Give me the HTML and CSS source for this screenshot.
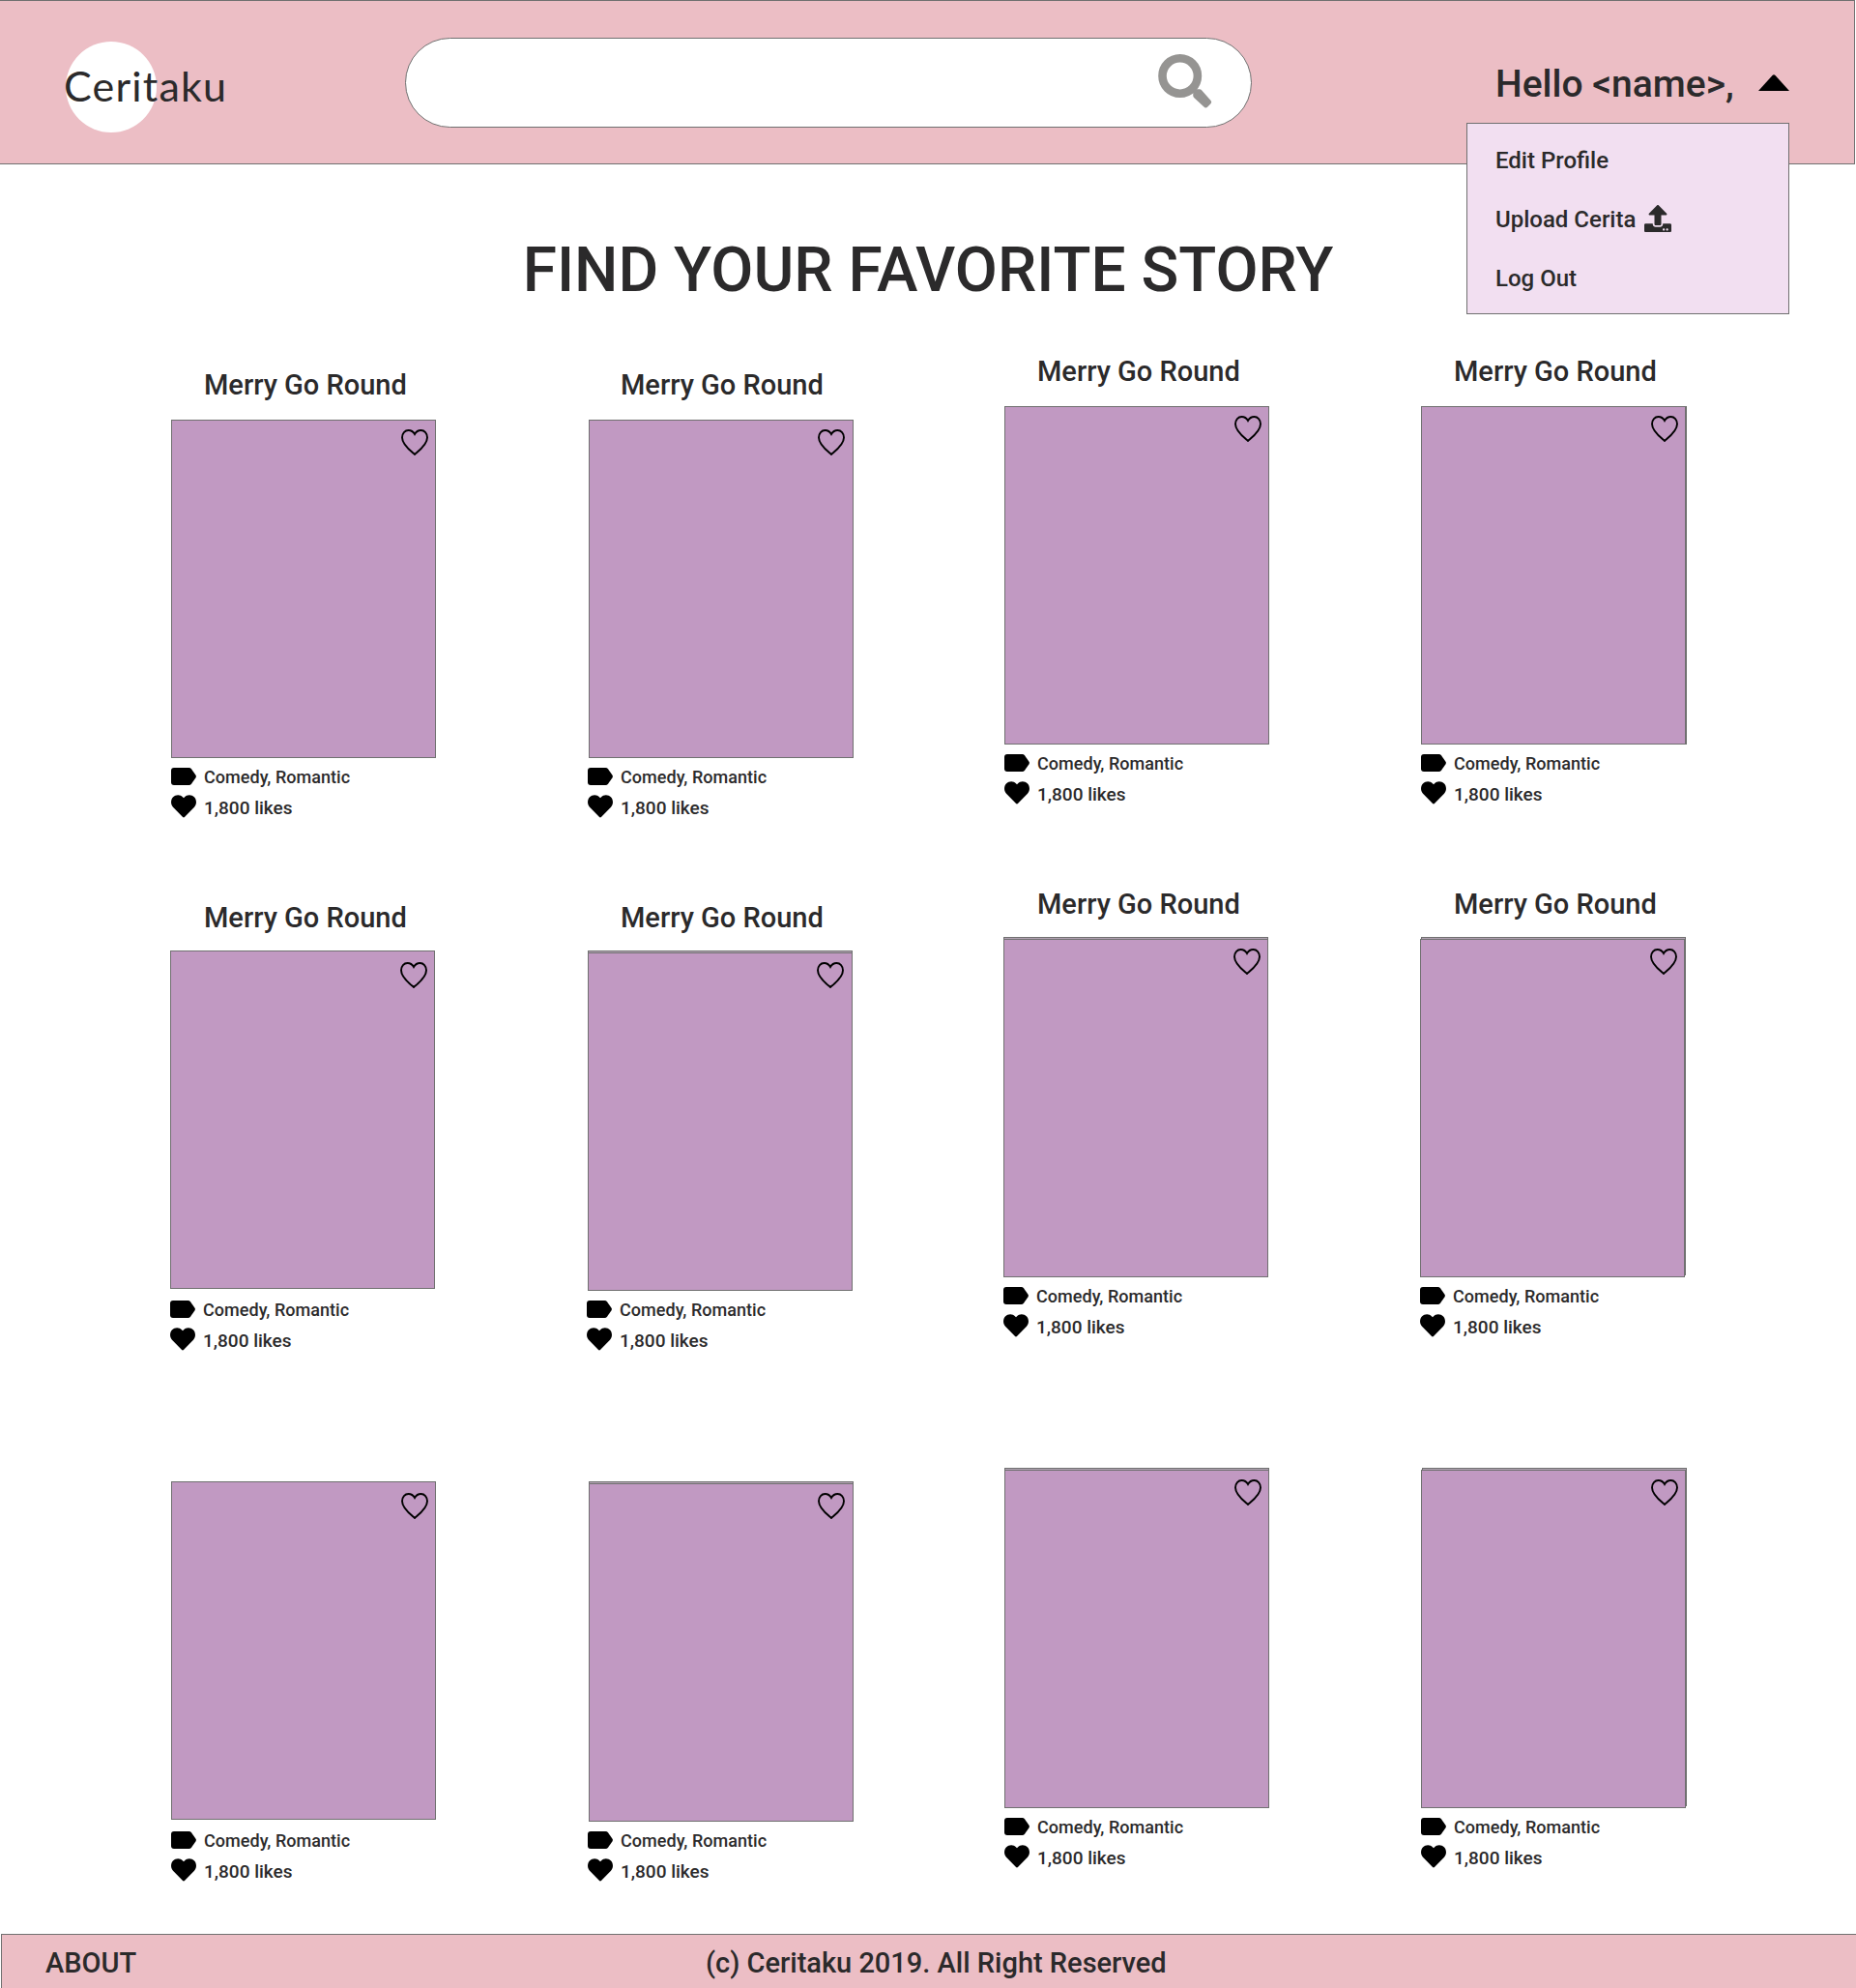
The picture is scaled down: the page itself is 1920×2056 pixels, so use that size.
FILE: index.html
```html
<!DOCTYPE html>
<html lang="en">
<head>
<meta charset="utf-8">
<title>Ceritaku</title>
<link rel="stylesheet" href="styles.css">
</head>
<body>
<svg width="0" height="0" class="sprite" aria-hidden="true">
  <symbol id="outline" viewBox="0 0 28 27"><path d="M14 26C10 22.500 1 16 1 8.500C1 4 4 1 7.500 1C10.500 1 12.700 2.700 14 5C15.300 2.700 17.500 1 20.500 1C24 1 27 4 27 8.500C27 16 18 22.500 14 26Z" fill="none" stroke="#000" stroke-width="1.900"/></symbol>
  <symbol id="heart" viewBox="0 0 26 24"><path d="M13 23.500Q12.400 23.500 11.800 22.800L2 12.800C-.7 10 -.5 5 1.900 2.500C5-.7 9.500-.5 12.200 2.400L13 3.200L13.800 2.400C16.500-.5 21-.7 24.100 2.500C26.500 5 26.700 10 24 12.800L14.200 22.800Q13.600 23.500 13 23.500Z"/></symbol>
  <symbol id="tag" viewBox="0 0 26 18"><path d="M3 0H18.500Q20 0 21 1.200L25.500 7.800Q26.300 9 25.500 10.200L21 16.800Q20 18 18.500 18H3Q0 18 0 15V3Q0 0 3 0Z"/></symbol>
</svg>
<header class="header">
  <div class="logo"><span class="logo-text">Ceritaku</span></div>
  <div class="search">
    <svg class="search-icon" width="56" height="56" viewBox="0 0 56 56"><circle cx="22.700" cy="22.500" r="18.200" fill="none" stroke="#959492" stroke-width="8.600"/><path d="M39 43V39H43L52.300 49.500L49.300 52.500Z" fill="#959492" stroke="#959492" stroke-width="5.500" stroke-linejoin="round"/></svg>
  </div>
  <div class="account">
    <span class="hello">Hello &lt;name&gt;,</span>
    <svg class="caret" width="32" height="17" viewBox="0 0 32 17"><path d="M0 17L14.500 1Q16-.5 17.500 1L32 17Z"/></svg>
    <nav class="menu">
      <a>Edit Profile</a>
      <a>Upload Cerita <svg width="28" height="28" viewBox="0 0 512 512"><path fill="#2b2a2b" d="M296 384h-80c-13.300 0-24-10.700-24-24V192h-87.700c-17.800 0-26.700-21.500-14.100-34.100L242.300 5.700c7.500-7.500 19.800-7.500 27.300 0l152.200 152.200c12.600 12.600 3.700 34.100-14.100 34.100H320v168c0 13.300-10.700 24-24 24zm216-8v112c0 13.300-10.700 24-24 24H24c-13.300 0-24-10.700-24-24V376c0-13.300 10.700-24 24-24h136v8c0 30.900 25.100 56 56 56h80c30.900 0 56-25.100 56-56v-8h136c13.300 0 24 10.700 24 24zm-124 88c0-11-9-20-20-20s-20 9-20 20 9 20 20 20 20-9 20-20zm64 0c0-11-9-20-20-20s-20 9-20 20 9 20 20 20 20-9 20-20z"/></svg></a>
      <a>Log Out</a>
    </nav>
  </div>
</header>
<main class="main">
  <h1 class="heading">FIND YOUR FAVORITE STORY</h1>
  <section class="stories" id="stories"></section>
</main>
<footer class="footer"><a class="about">ABOUT</a><span>(c) Ceritaku 2019. All Right Reserved</span></footer>
<script src="stories.js"></script>
</body>
</html>
```

FILE: styles.css
```css
* { box-sizing: border-box; }
body { margin: 0; width: 1920px; height: 2056px; overflow: hidden; background: #fff; color: #2b2a2b; font-family: Roboto, sans-serif; font-weight: 500; }
.sprite { position: absolute; }
svg { display: block; flex: none; }

.header { display: flex; width: 1919px; height: 170px; padding-left: 68px; background: #ecbec5; border: 1px solid #707070; border-left: 0; }
.logo { display: flex; align-items: center; width: 94px; height: 94px; margin-top: 42px; border-radius: 50%; background: #fff; }
.logo-text { margin: -3px 0 0 -2px; font: 400 43px/50px Lato, sans-serif; letter-spacing: 1.2px; white-space: nowrap; }
.search { display: flex; justify-content: flex-end; width: 876px; height: 93px; margin: 38px 0 0 257px; padding: 16px 40px 0 0; background: #fff; border: 1px solid #707070; border-radius: 47px; }
.account { position: relative; display: flex; width: 334px; margin-left: 222px; padding: 61px 0 0 30px; justify-content: space-between; }
.hello { padding-top: 1px; font-size: 39px; line-height: 48px; white-space: nowrap; }
.caret { margin-top: 15px; }
.menu { position: absolute; left: 0; top: 126px; width: 334px; height: 198px; padding: 23px 29px; display: flex; flex-direction: column; gap: 31px; background: #f2dff1; border: 1px solid #707070; font-size: 24px; line-height: 30px; }
.menu a { display: flex; gap: 9px; white-space: nowrap; }

.main { height: 1830px; padding-top: 72px; }
.heading { margin: 0; font-size: 64px; font-weight: 500; line-height: 76px; text-align: center; }
.stories { display: grid; grid-template-columns: repeat(4, 274px); grid-template-rows: 551px 549px 468px; column-gap: 157px; padding: 62px 0 0 177px; }
.raised { margin-top: -14px; }
.title { margin: 0 0 18px; height: 36px; padding-left: 34px; font-size: 29px; font-weight: 500; line-height: 36px; white-space: nowrap; }
.body { width: 274px; }
.nudged { margin-left: -1px; }
.cover { position: relative; display: flex; justify-content: flex-end; width: 274px; height: 350px; padding: 9px 7.5px 0 0; background: #c199c2; border: 1px solid #707070; }
.inset { margin-left: 1px; padding-right: 8.5px; }
.lifted { transform: translateY(-2px); }
.lifted .like { transform: translateY(2px); }
.backed::before { content: ""; position: absolute; z-index: -1; inset: -3px -1px 1px -1px; background: #b3a3b4; border: 1px solid #707070; }
.side::before { content: ""; position: absolute; z-index: -1; inset: -1px -2px -1px 0; border: 1px solid #707070; }
.backed.side::before { inset: -3px -2px 1px 0; }
.meta { display: flex; flex-direction: column; gap: 8px; padding-top: 8px; line-height: 24px; white-space: nowrap; }
.meta div { display: flex; gap: 8px; height: 24px; }
.genre { font-size: 18px; letter-spacing: .04px; }
.genre svg { margin-top: 2px; }
.likes { font-size: 19px; }
.likes svg { margin-top: -2.5px; }

.footer { display: flex; width: 1919px; height: 60px; margin-left: 1px; padding: 11px 0 0 45px; background: #ecbec5; border: 1px solid #707070; border-right: 0; font-size: 29px; line-height: 37px; white-space: nowrap; }
.about { width: 683px; }
```

FILE: stories.js
```js
const grid = document.getElementById("stories");
for (let row = 0; row < 3; row++) {
  for (let col = 0; col < 4; col++) {
    const cover = ["cover"];
    if (row > 0 && col === 0) cover.push("lifted");
    if (row > 0 && col > 0) cover.push("backed");
    if (col === 1) cover.push("inset");
    if (col === 3) cover.push("side");
    grid.insertAdjacentHTML("beforeend", `
      <article class="${col > 1 ? "raised" : ""}">
        <h2 class="title">${row < 2 ? "Merry Go Round" : ""}</h2>
        <div class="body ${row === 1 ? "nudged" : ""}">
          <div class="${cover.join(" ")}"><svg class="like" width="28" height="27"><use href="#outline"/></svg></div>
          <div class="meta">
            <div class="genre"><svg width="26" height="18"><use href="#tag"/></svg>Comedy, Romantic</div>
            <div class="likes"><svg width="26" height="24"><use href="#heart"/></svg>1,800 likes</div>
          </div>
        </div>
      </article>`);
  }
}
```
